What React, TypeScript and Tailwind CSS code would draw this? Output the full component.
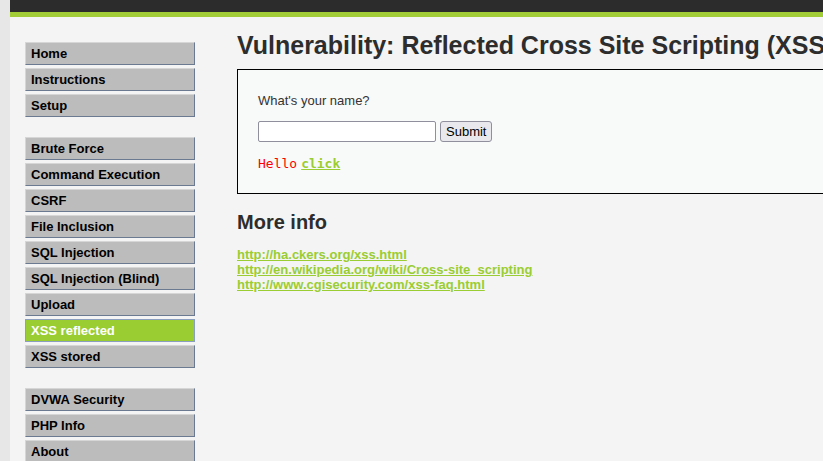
const menuGroups: string[][] = [
  ["Home", "Instructions", "Setup"],
  [
    "Brute Force",
    "Command Execution",
    "CSRF",
    "File Inclusion",
    "SQL Injection",
    "SQL Injection (Blind)",
    "Upload",
    "XSS reflected",
    "XSS stored",
  ],
  ["DVWA Security", "PHP Info", "About"],
];

const links = [
  "http://ha.ckers.org/xss.html",
  "http://en.wikipedia.org/wiki/Cross-site_scripting",
  "http://www.cgisecurity.com/xss-faq.html",
];

function MenuItem({ label }: { label: string }) {
  const active = label === "XSS reflected";
  return (
    <li className="mb-[3px]">
      <a
        href="#"
        className={
          active
            ? "block h-[23px] border border-[#8a9fc0] bg-[#9acd32] px-[5px] text-[13px] font-bold leading-[21px] text-white"
            : "block h-[23px] border border-t-[#d6d6d6] border-l-[#d6d6d6] border-r-[#6b7a90] border-b-[#6b7a90] bg-[#bcbcbc] px-[5px] text-[13px] font-bold leading-[21px] text-black"
        }
      >
        {label}
      </a>
    </li>
  );
}

export default function App() {
  return (
    <div
      className="h-[461px] w-[823px] overflow-hidden bg-[#e7e7e7] pl-[10px]"
      style={{ fontFamily: '"Liberation Sans", Arial, sans-serif' }}
    >
      <div className="h-full w-[900px] bg-[#f4f4f4]">
        <div className="h-[12px] bg-[#2c2c2c]"></div>
        <div className="h-[5px] bg-[#a3cd36]"></div>

        <div className="flex">
          <div className="w-[227px] shrink-0 pl-[15px] pt-[25px]">
            {menuGroups.map((group, i) => (
              <ul key={i} className="mb-[20px] w-[170px]">
                {group.map((label) => (
                  <MenuItem key={label} label={label} />
                ))}
              </ul>
            ))}
          </div>

          <div className="w-[640px] shrink-0 pt-[14px] text-[#333]">
            <h1 className="whitespace-nowrap text-[25px] font-bold leading-[28px] text-[#2d2d2d]">
              Vulnerability: Reflected Cross Site Scripting (XSS)
            </h1>

            <div className="mt-[10px] h-[125px] border border-black bg-[#f8f9f9] px-[20px] pt-[23px]">
              <p className="text-[13px] leading-[15px] text-[#333]">What's your name?</p>
              <div className="mt-[13px] flex items-center gap-[4px]">
                <input
                  type="text"
                  className="h-[21px] w-[178px] rounded-[2px] border border-[#8f8f9d] bg-white"
                />
                <button className="h-[21px] rounded-[3px] border border-[#8f8f9d] bg-[#e9e9ed] px-[5px] text-[13px] leading-[19px] text-black">
                  Submit
                </button>
              </div>
              <pre
                className="mt-[14px] flex text-[13px] leading-[15px]"
                style={{ fontFamily: '"DejaVu Sans Mono", monospace' }}
              >
                <span className="text-[#ff0000]">Hello</span>
                <a href="#" className="ml-[4px] font-bold text-[#9acd32] underline">
                  click
                </a>
              </pre>
            </div>

            <h2 className="mt-[16px] text-[20px] font-bold leading-[24px] text-[#2d2d2d]">More info</h2>
            <ul className="mt-[13px]">
              {links.map((l) => (
                <li key={l} className="text-[13px] font-bold leading-[15px]">
                  <a href="#" className="text-[#9acd32] underline">
                    {l}
                  </a>
                </li>
              ))}
            </ul>
          </div>
        </div>
      </div>
    </div>
  );
}
